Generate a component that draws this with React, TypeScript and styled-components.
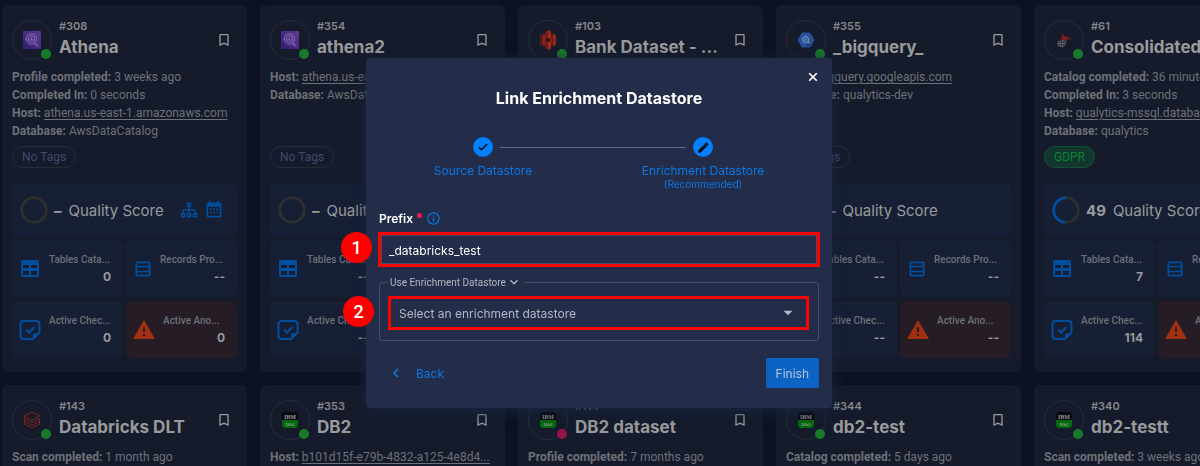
import React from "react";
import styled, { createGlobalStyle, css } from "styled-components";

const color = {
  page: "#0d1223",
  card: "#151b2a",
  tile: "#171f34",
  alertTile: "#251c26",
  cardLine: "#252c3a",
  title: "#999a9c",
  meta: "#6d7179",
  dimBlue: "#004f9e",
  orange: "#a12f10",
  modal: "#232c48",
  modalLine: "#444b66",
  blue: "#007fff",
  link: "#0b78e3",
  callout: "#ff0000",
};

const compactFont = `Roboto, "Liberation Sans", sans-serif`;

const GlobalStyle = createGlobalStyle`
  *, *::before, *::after { box-sizing: border-box; }
  body {
    margin: 0;
    background: ${color.page};
    font-family: Inter, "Liberation Sans", sans-serif;
    font-size: 12px;
  }
  button, input, select { font: inherit; color: inherit; }
`;

/* ---------- icons ---------- */

const Glyph = styled.svg<{ $size: number }>`
  display: block;
  flex: none;
  width: ${(p) => p.$size}px;
  height: ${(p) => p.$size}px;
  fill: currentColor;
`;

const paths = {
  bookmark: "M17,18L12,15.82L7,18V5H17M17,3H7A2,2 0 0,0 5,5V21L12,18L19,21V5C19,3.89 18.1,3 17,3Z",
  table:
    "M5,3H19A2,2 0 0,1 21,5V18A2,2 0 0,1 19,20H5A2,2 0 0,1 3,18V5A2,2 0 0,1 5,3M5,8V11H11V8H5M13,8V11H19V8H13M5,14V18H11V14H5M13,14V18H19V14H13Z",
  rows:
    "M5,3H19A2,2 0 0,1 21,5V19A2,2 0 0,1 19,21H5A2,2 0 0,1 3,19V5A2,2 0 0,1 5,3M5,5V8H19V5H5M5,10V14H19V10H5M5,16V19H19V16H5Z",
  alert: "M13 14H11V9H13M13 18H11V16H13M1 21H23L12 2L1 21Z",
  calendar:
    "M9,10V12H7V10H9M13,10V12H11V10H13M17,10V12H15V10H17M19,3A2,2 0 0,1 21,5V19A2,2 0 0,1 19,21H5C3.89,21 3,20.1 3,19V5A2,2 0 0,1 5,3H6V1H8V3H16V1H18V3H19M19,19V8H5V19H19M9,14V16H7V14H9M13,14V16H11V14H13M17,14V16H15V14H17Z",
  sitemap:
    "M9 2V8H11V11H5C3.89 11 3 11.89 3 13V16H1V22H7V16H5V13H11V16H9V22H15V16H13V13H19V16H17V22H23V16H21V13C21 11.89 20.11 11 19 11H13V8H15V2H9M11 4H13V6H11V4M3 18H5V20H3V18M11 18H13V20H11V18M19 18H21V20H19V18Z",
  close:
    "M19 6.41L17.59 5L12 10.59L6.41 5L5 6.41L10.59 12L5 17.59L6.41 19L12 13.41L17.59 19L19 17.59L13.41 12L19 6.41Z",
  check: "M21,7L9,19L3.5,13.5L4.91,12.09L9,16.17L19.59,5.59L21,7Z",
  pencil:
    "M20.71,7.04C21.1,6.65 21.1,6 20.71,5.63L18.37,3.29C18,2.9 17.35,2.9 16.96,3.29L15.12,5.12L18.87,8.87M3,17.25V21H6.75L17.81,9.93L14.06,6.18L3,17.25Z",
  info:
    "M11,9H13V7H11M12,20C7.59,20 4,16.41 4,12C4,7.59 7.59,4 12,4C16.41,4 20,7.59 20,12C20,16.41 16.41,20 12,20M12,2A10,10 0 0,0 2,12A10,10 0 0,0 12,22A10,10 0 0,0 22,12A10,10 0 0,0 12,2M11,17H13V11H11V17Z",
  chevronDown: "M7.41,8.58L12,13.17L16.59,8.58L18,10L12,16L6,10L7.41,8.58Z",
  chevronLeft: "M15.41,16.58L10.83,12L15.41,7.41L14,6L8,12L14,18L15.41,16.58Z",
  caret: "M6,9L12,15L18,9H6Z",
};

const Icon = ({ name, size, bold }: { name: keyof typeof paths; size: number; bold?: boolean }) => (
  <Glyph $size={size} viewBox="0 0 24 24" aria-hidden="true">
    <path
      d={paths[name]}
      fillRule="evenodd"
      stroke={bold ? "currentColor" : "none"}
      strokeWidth="1"
    />
  </Glyph>
);

const NoteCheckIcon = () => (
  <Glyph $size={22} viewBox="0 0 22 22" aria-hidden="true">
    <path
      d="M14 20H4.500A3 3 0 0 1 1.500 17V5A3 3 0 0 1 4.500 2H17.500A3 3 0 0 1 20.500 5V14.500"
      fill="none"
      stroke="currentColor"
      strokeWidth="2"
    />
    <path d="M21.500 14L14 21.500V17A3 3 0 0 1 17 14Z" />
    <path d="M7 10.500L10 13.500L15.500 8" fill="none" stroke="currentColor" strokeWidth="2" />
  </Glyph>
);

/* ---------- data source logos ---------- */

const AthenaLogo = () => (
  <Glyph $size={18} viewBox="0 0 18 18" aria-hidden="true">
    <defs>
      <linearGradient id="athena" x1="0" y1="1" x2="1" y2="0">
        <stop offset="0" stopColor="#2f1d70" />
        <stop offset="1" stopColor="#603991" />
      </linearGradient>
    </defs>
    <rect width="18" height="18" fill="url(#athena)" />
    <g fill="none" stroke="#917bb5" strokeWidth="0.800">
      <circle cx="8.500" cy="8" r="5.200" />
      <circle cx="8.500" cy="8" r="3.200" />
      <path d="M7 9.500V7.500M8.500 9.500V6.500M10 9.500V7.800M12 11.500L15 14.500L14.200 15.300L11.200 12.300M2 8H3.500M4 4L5 5" />
    </g>
  </Glyph>
);

const RedshiftLogo = () => (
  <Glyph $size={20} viewBox="0 0 20 20" aria-hidden="true">
    <path d="M2 5L5 3.500V16.500L2 15Z" fill="#5c1a16" />
    <path d="M18 5L15 3.500V16.500L18 15Z" fill="#8c261c" />
    <path d="M5 4.500H15V15.500H5Z" fill="#6b1d17" />
    <path d="M5 4.500H9V15.500H5Z" fill="#8c261c" />
    <path d="M7 1.500L10 0V20L7 18.500Z" fill="#6b1d17" />
    <path d="M10 0L13 1.500V18.500L10 20Z" fill="#9a2b20" />
    <path d="M8 8H12V12H8Z" fill="#3f1417" />
  </Glyph>
);

const BigQueryLogo = () => (
  <Glyph $size={18} viewBox="0 0 18 18" aria-hidden="true">
    <path d="M5 1.500H13L17.500 9L13 16.500H5L0.500 9Z" fill="#28539b" />
    <path d="M11.500 12L16 14L13 16.500H11L8 12Z" fill="#214481" />
    <circle cx="8.700" cy="8.700" r="3" fill="none" stroke="#8c9bb8" strokeWidth="1" />
    <path d="M7.700 9.500V8.500M9 10V7.500M11 11L12.500 12.500" stroke="#8c9bb8" strokeWidth="1" />
  </Glyph>
);

const SqlServerLogo = () => (
  <Glyph $size={18} viewBox="0 0 18 18" aria-hidden="true">
    <path
      d="M6 2C9 3 8 5 11 5.500C13 6 15 6 16.500 9C14.500 7.500 13 8 12 9.500C9 9 8 9.500 5.500 9C8 8 7 4 6 2Z"
      fill="#7a1d22"
    />
    <path
      d="M3 11L8 9.500L11 10.500L9.500 14L7.500 16L3 14.500ZM3 12.700L10 12.500M5.500 10.500L5 15.200M8 9.700L7.500 15.700"
      fill="none"
      stroke="#696e78"
      strokeWidth="0.900"
    />
  </Glyph>
);

const DatabricksLogo = () => (
  <Glyph $size={18} viewBox="0 0 18 18" aria-hidden="true">
    <g fill="none" stroke="#7d241f" strokeWidth="1">
      <path d="M1.500 5L9 1L16.500 5L9 9L1.500 5V7.500L9 11.500L16.500 7.500" />
      <path d="M1.500 7.500V10.500L9 14.200L16.500 10.500V8" />
      <path d="M1.500 10.500V13L9 17L16.500 13V10.500" />
    </g>
  </Glyph>
);

const Db2Logo = () => (
  <Glyph $size={18} viewBox="0 0 18 18" aria-hidden="true">
    <rect x="1" y="1" width="16" height="16" rx="3" fill="#05080c" />
    <path d="M1 9H17V14A3 3 0 0 1 14 17H4A3 3 0 0 1 1 14Z" fill="#006b0c" />
    <g fill="#9a9a9a" fontFamily="Liberation Serif, serif" fontWeight="700" textAnchor="middle">
      <text x="9" y="8" fontSize="6">IBM</text>
      <text x="9" y="15" fontSize="5">Db2</text>
    </g>
  </Glyph>
);

/* ---------- datastore cards ---------- */

const Page = styled.main`
  height: 100vh;
  overflow: hidden;
  padding: 5px 2px;
`;

const CardGrid = styled.div`
  display: grid;
  grid-template-columns: repeat(5, minmax(245px, 1fr));
  gap: 13px;
`;

const Card = styled.article`
  min-width: 0;
  padding: 15px 10px 14px;
  border-radius: 6px;
  background: ${color.card};
`;

const CardHeader = styled.header`
  display: flex;
  align-items: center;
  gap: 7px;
  height: 40px;
  padding-right: 5px;
  color: ${color.title};
`;

const Avatar = styled.div`
  position: relative;
  display: grid;
  place-items: center;
  flex: none;
  width: 40px;
  height: 40px;
  border: 1px solid ${color.cardLine};
  border-radius: 50%;
`;

const StatusDot = styled.span<{ $failed?: boolean }>`
  position: absolute;
  right: 0;
  bottom: 0;
  width: 10px;
  height: 10px;
  border-radius: 50%;
  background: ${(p) => (p.$failed ? "#98124a" : "#177a2b")};
`;

const Heading = styled.div`
  flex: 1;
  min-width: 0;
  white-space: nowrap;
`;

const StoreId = styled.div`
  font-size: 11px;
  font-weight: 600;
  line-height: 14px;
  color: #85878b;
`;

const StoreName = styled.h2`
  margin: 0;
  font-size: 17px;
  font-weight: 700;
  line-height: 28px;
`;

const BookmarkButton = styled.button`
  display: flex;
  padding: 0;
  border: 0;
  background: none;
`;

const MetaList = styled.dl`
  height: 72px;
  margin: 8px 0 6px;
  font-family: ${compactFont};
  line-height: 18px;
  color: ${color.meta};
  white-space: nowrap;
`;

const MetaRow = styled.div`
  display: flex;
  gap: 3px;
`;

const MetaTerm = styled.dt`
  font-weight: 700;
`;

const MetaValue = styled.dd`
  margin: 0;
`;

const HostLink = styled.a`
  color: inherit;
  text-decoration: underline;
  text-underline-offset: 2px;
`;

const Tag = styled.span<{ $green?: boolean }>`
  display: inline-flex;
  align-items: center;
  height: 22px;
  padding: 0 9px;
  border: 1px solid ${color.cardLine};
  border-radius: 11px;
  color: #424a6b;
  font-family: ${compactFont};
  ${(p) =>
    p.$green &&
    css`
      border-color: #125239;
      background: #11372f;
      color: #0b8438;
    `}
`;

const ScoreTile = styled.section`
  display: flex;
  align-items: center;
  height: 54px;
  margin: 15px 0 3px;
  padding: 0 13px 0 8px;
  border-radius: 6px;
  background: ${color.tile};
  color: ${color.title};
  font-size: 15px;
  white-space: nowrap;
`;

const Score = styled.strong`
  margin: 0 7px 0 6px;
  font-weight: 700;
`;

const ScoreActions = styled.span`
  display: flex;
  align-items: center;
  gap: 6px;
  margin-left: auto;
  color: ${color.dimBlue};
`;

const TileGrid = styled.div`
  display: grid;
  grid-template-columns: 1fr 1fr;
  gap: 4px 3px;
`;

const Tile = styled.section<{ $alert?: boolean }>`
  display: flex;
  align-items: center;
  gap: 7px;
  min-width: 0;
  height: 57px;
  padding: 0 12px 0 6px;
  border-radius: 6px;
  background: ${(p) => (p.$alert ? color.alertTile : color.tile)};
`;

const TileIcon = styled.span<{ $narrow?: boolean; $alert?: boolean }>`
  display: flex;
  justify-content: center;
  flex: none;
  width: ${(p) => (p.$narrow ? 21 : 24)}px;
  color: ${(p) => (p.$alert ? color.orange : color.dimBlue)};
`;

const TileBody = styled.div`
  flex: 1;
  min-width: 0;
  padding-bottom: 2px;
  white-space: nowrap;
`;

const TileLabel = styled.div`
  font-family: ${compactFont};
  font-size: 10px;
  font-weight: 500;
  line-height: 17px;
  color: ${color.meta};
`;

const TileValue = styled.div`
  font-weight: 700;
  line-height: 17px;
  text-align: right;
  color: ${color.title};
`;

const Ring = ({ score }: { score?: number }) => (
  <Glyph $size={28} viewBox="0 0 28 28" aria-hidden="true">
    <circle cx="14" cy="14" r="12.300" fill="none" stroke="#30302f" strokeWidth="2.600" />
    {score !== undefined && (
      <circle
        cx="14"
        cy="14"
        r="12.300"
        fill="none"
        stroke={color.dimBlue}
        strokeWidth="2.600"
        pathLength="100"
        strokeDasharray={`${score} 100`}
        transform={`rotate(${-90 - score * 3.6} 14 14)`}
      />
    )}
  </Glyph>
);

type Meta = { term: string; value: string; link?: boolean };
type Store = {
  id: number;
  name: string;
  logo: React.ReactNode;
  meta: Meta[];
  failed?: boolean;
  tag?: string;
  score?: number;
  actions?: boolean;
  counts?: [string, string, string, string];
};

const none: [string, string, string, string] = ["--", "--", "--", "--"];

const stores: Store[] = [
  {
    id: 308,
    name: "Athena",
    logo: <AthenaLogo />,
    actions: true,
    counts: ["0", "--", "0", "0"],
    meta: [
      { term: "Profile completed:", value: "3 weeks ago" },
      { term: "Completed In:", value: "0 seconds" },
      { term: "Host:", value: "athena.us-east-1.amazonaws.com", link: true },
      { term: "Database:", value: "AwsDataCatalog" },
    ],
  },
  {
    id: 354,
    name: "athena2",
    logo: <AthenaLogo />,
    meta: [
      { term: "Host:", value: "athena.us-east-1.amazonaws.com", link: true },
      { term: "Database:", value: "AwsDataCatalog" },
    ],
  },
  { id: 103, name: "Bank Dataset - ...", logo: <RedshiftLogo />, meta: [] },
  {
    id: 355,
    name: "_bigquery_",
    logo: <BigQueryLogo />,
    meta: [
      { term: "Host:", value: "bigquery.googleapis.com", link: true },
      { term: "Database:", value: "qualytics-dev" },
    ],
  },
  {
    id: 61,
    name: "Consolidated",
    logo: <SqlServerLogo />,
    tag: "GDPR",
    score: 49,
    counts: ["7", "--", "114", "--"],
    meta: [
      { term: "Catalog completed:", value: "36 minutes ago" },
      { term: "Completed In:", value: "3 seconds" },
      { term: "Host:", value: "qualytics-mssql.database", link: true },
      { term: "Database:", value: "qualytics" },
    ],
  },
  {
    id: 143,
    name: "Databricks DLT",
    logo: <DatabricksLogo />,
    meta: [{ term: "Scan completed:", value: "1 month ago" }],
  },
  {
    id: 353,
    name: "DB2",
    logo: <Db2Logo />,
    meta: [{ term: "Host:", value: "b101d15f-e79b-4832-a125-4e8d4...", link: true }],
  },
  {
    id: 114,
    name: "DB2 dataset",
    logo: <Db2Logo />,
    failed: true,
    meta: [{ term: "Profile completed:", value: "7 months ago" }],
  },
  {
    id: 344,
    name: "db2-test",
    logo: <Db2Logo />,
    meta: [{ term: "Catalog completed:", value: "5 days ago" }],
  },
  {
    id: 340,
    name: "db2-testt",
    logo: <Db2Logo />,
    meta: [{ term: "Scan completed:", value: "3 weeks ago" }],
  },
];

const StoreCard = ({ store }: { store: Store }) => {
  const [tables, records, checks, anomalies] = store.counts ?? none;
  return (
    <Card>
      <CardHeader>
        <Avatar>
          {store.logo}
          <StatusDot $failed={store.failed} />
        </Avatar>
        <Heading>
          <StoreId>#{store.id}</StoreId>
          <StoreName>{store.name}</StoreName>
        </Heading>
        <BookmarkButton type="button" aria-label={`Bookmark ${store.name}`}>
          <Icon name="bookmark" size={16} />
        </BookmarkButton>
      </CardHeader>
      <MetaList>
        {store.meta.map((m) => (
          <MetaRow key={m.term}>
            <MetaTerm>{m.term}</MetaTerm>
            <MetaValue>{m.link ? <HostLink href="#host">{m.value}</HostLink> : m.value}</MetaValue>
          </MetaRow>
        ))}
      </MetaList>
      <Tag $green={!!store.tag}>{store.tag ?? "No Tags"}</Tag>
      <ScoreTile>
        <Ring score={store.score} />
        <Score>{store.score ?? "–"}</Score>
        <span>Quality Score</span>
        {store.actions && (
          <ScoreActions>
            <Icon name="sitemap" size={18} />
            <Icon name="calendar" size={20} />
          </ScoreActions>
        )}
      </ScoreTile>
      <TileGrid>
        <Tile>
          <TileIcon><Icon name="table" size={24} /></TileIcon>
          <TileBody>
            <TileLabel>Tables Cata...</TileLabel>
            <TileValue>{tables}</TileValue>
          </TileBody>
        </Tile>
        <Tile>
          <TileIcon $narrow><Icon name="rows" size={20} /></TileIcon>
          <TileBody>
            <TileLabel>Records Pro...</TileLabel>
            <TileValue>{records}</TileValue>
          </TileBody>
        </Tile>
        <Tile>
          <TileIcon><NoteCheckIcon /></TileIcon>
          <TileBody>
            <TileLabel>Active Chec...</TileLabel>
            <TileValue>{checks}</TileValue>
          </TileBody>
        </Tile>
        <Tile $alert>
          <TileIcon $alert><Icon name="alert" size={24} /></TileIcon>
          <TileBody>
            <TileLabel>Active Ano...</TileLabel>
            <TileValue>{anomalies}</TileValue>
          </TileBody>
        </Tile>
      </TileGrid>
    </Card>
  );
};

/* ---------- dialog ---------- */

const Overlay = styled.div`
  position: fixed;
  inset: 0;
  display: flex;
  align-items: center;
  justify-content: center;
  padding-right: 2px;
`;

const Dialog = styled.div`
  position: relative;
  width: 100%;
  max-width: 466px;
  padding: 28px 13px 20px;
  border-radius: 3px;
  background: ${color.modal};
  box-shadow: 0 3px 14px #17233f;
  color: #fff;
`;

const CloseButton = styled.button`
  position: absolute;
  top: 12px;
  right: 12px;
  display: flex;
  padding: 0;
  border: 0;
  background: none;
`;

const DialogTitle = styled.h1`
  margin: 0 0 27px;
  font-size: 16px;
  font-weight: 700;
  line-height: 24px;
  text-align: center;
`;

const Steps = styled.ol`
  display: flex;
  margin: 0 6px 0 -6px;
  padding: 0;
  list-style: none;
  color: ${color.link};
  text-align: center;
`;

const Step = styled.li`
  flex: 1;
`;

const StepTrack = styled.div`
  display: flex;
  align-items: center;
  gap: 7px;
  margin-bottom: 6px;
`;

const StepLine = styled.span<{ $hidden?: boolean }>`
  flex: 1;
  height: 1px;
  background: ${(p) => (p.$hidden ? "transparent" : "#626983")};
`;

const StepMarker = styled.span`
  display: grid;
  place-items: center;
  width: 20px;
  height: 20px;
  border-radius: 50%;
  background: ${color.blue};
  color: #0a0f1c;
`;

const StepLabel = styled.div`
  line-height: 16px;
`;

const StepHint = styled.div`
  font-size: 10px;
  line-height: 10px;
`;

const PrefixRow = styled.div`
  display: flex;
  align-items: center;
  gap: 4px;
  height: 16px;
  margin: 21px 0 6px;
  color: ${color.link};
`;

const PrefixLabel = styled.label`
  font-weight: 600;
  color: #fff;
`;

const RequiredDot = styled.span`
  width: 5px;
  height: 5px;
  margin-bottom: 6px;
  border-radius: 50%;
  background: #f01a5e;
`;

const Callout = styled.div`
  position: relative;
  display: flex;
  align-items: center;
  border: 3px solid ${color.callout};
`;

const PrefixCallout = styled(Callout)`
  height: 35px;
  margin: 0 -1px 8px;
`;

const SelectCallout = styled(Callout)`
  height: 34px;
  padding-right: 9px;
  color: #b4b7c2;
`;

const StepNumber = styled.span<{ $reach: number }>`
  position: absolute;
  top: -3px;
  left: -${(p) => p.$reach}px;
  display: grid;
  place-items: center;
  width: 31px;
  height: 31px;
  border-radius: 50%;
  background: ${color.callout};
  color: #fff;
  font-family: Roboto, sans-serif;
  font-size: 18px;
  font-weight: 500;
`;

const PrefixInput = styled.input`
  flex: 1;
  min-width: 0;
  height: 100%;
  padding: 2px 7px 0;
  border: 1px solid ${color.modalLine};
  outline: 0;
  background: transparent;
`;

const StoreSelect = styled.select`
  flex: 1;
  min-width: 0;
  height: 100%;
  padding: 0 8px;
  border: 0;
  outline: 0;
  appearance: none;
  background: transparent;

  option {
    background: ${color.modal};
  }
`;

const StoreFieldset = styled.fieldset`
  min-width: 0;
  margin: 0 0 17px;
  padding: 7px 9px 10px 8px;
  border: 1px solid ${color.modalLine};
  border-radius: 3px;
`;

const Legend = styled.legend`
  padding: 0 2px;
`;

const LegendButton = styled.button`
  display: flex;
  align-items: center;
  height: 14px;
  padding: 0;
  border: 0;
  background: none;
  color: #b4b7c2;
  font-family: ${compactFont};
  font-size: 10px;
`;

const Footer = styled.footer`
  display: flex;
  align-items: center;
  justify-content: space-between;
`;

const BackButton = styled.button`
  display: flex;
  align-items: center;
  gap: 11px;
  height: 30px;
  padding: 0 8px;
  border: 0;
  background: none;
  color: ${color.link};
`;

const FinishButton = styled.button`
  height: 30px;
  padding: 0 10px;
  border: 0;
  border-radius: 2px;
  background: #0b63c4;
  color: #b9c4d8;
`;

const LinkDialog = () => (
  <Dialog role="dialog" aria-labelledby="dialog-title">
    <CloseButton type="button" aria-label="Close">
      <Icon name="close" size={14} bold />
    </CloseButton>
    <DialogTitle id="dialog-title">Link Enrichment Datastore</DialogTitle>
    <Steps>
      <Step>
        <StepTrack>
          <StepLine $hidden />
          <StepMarker><Icon name="check" size={12} bold /></StepMarker>
          <StepLine />
        </StepTrack>
        <StepLabel>Source Datastore</StepLabel>
      </Step>
      <Step>
        <StepTrack>
          <StepLine />
          <StepMarker><Icon name="pencil" size={13} bold /></StepMarker>
          <StepLine $hidden />
        </StepTrack>
        <StepLabel>Enrichment Datastore</StepLabel>
        <StepHint>(Recommended)</StepHint>
      </Step>
    </Steps>
    <PrefixRow>
      <PrefixLabel htmlFor="prefix">Prefix</PrefixLabel>
      <RequiredDot />
      <Icon name="info" size={15} />
    </PrefixRow>
    <PrefixCallout>
      <StepNumber $reach={40}>1</StepNumber>
      <PrefixInput id="prefix" type="text" defaultValue="_databricks_test" />
    </PrefixCallout>
    <StoreFieldset>
      <Legend>
        <LegendButton type="button">
          Use Enrichment Datastore
          <Icon name="chevronDown" size={16} />
        </LegendButton>
      </Legend>
      <SelectCallout>
        <StepNumber $reach={48}>2</StepNumber>
        <StoreSelect aria-label="Enrichment datastore">
          <option>Select an enrichment datastore</option>
        </StoreSelect>
        <Icon name="caret" size={18} />
      </SelectCallout>
    </StoreFieldset>
    <Footer>
      <BackButton type="button">
        <Icon name="chevronLeft" size={18} />
        Back
      </BackButton>
      <FinishButton type="button">Finish</FinishButton>
    </Footer>
  </Dialog>
);

export default function App() {
  return (
    <>
      <GlobalStyle />
      <Page>
        <CardGrid>
          {stores.map((store) => (
            <StoreCard key={store.id} store={store} />
          ))}
        </CardGrid>
      </Page>
      <Overlay>
        <LinkDialog />
      </Overlay>
    </>
  );
}
